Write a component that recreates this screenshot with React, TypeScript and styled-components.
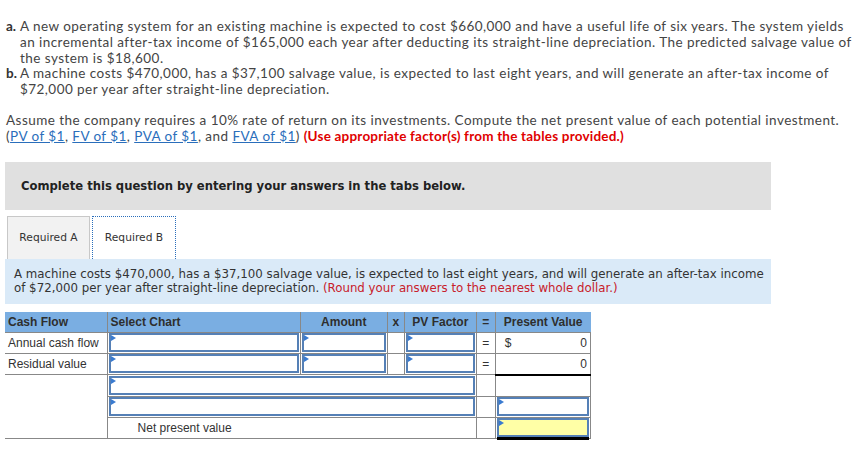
import styled, { createGlobalStyle, css } from "styled-components";

const GlobalStyle = createGlobalStyle`
  html, body {
    margin: 0;
    padding: 0;
    background: #fff;
  }
`;

const Page = styled.div`
  padding: 19px 0 0 6px;
  width: 848px;
`;

const Problem = styled.div`
  font-family: Lato, "Open Sans", sans-serif;
  font-size: 13.5px;
  line-height: 15.8px;
  letter-spacing: 0.45px;
  color: #444;
`;

const Item = styled.div`
  display: flex;
`;

const Label = styled.span`
  flex: 0 0 14px;
  font-weight: bold;
  letter-spacing: 0;
  color: #333;
`;

const ItemText = styled.div`
  flex: 1;
`;

const Assume = styled.p`
  margin: 15px 0 0;
`;

const Ref = styled.a`
  color: #2a6ebb;
  text-decoration: underline;
`;

const Warn = styled.strong`
  color: #e00000;
  letter-spacing: 0.2px;
`;

const Prompt = styled.div`
  margin: 17px 0 0 -1px;
  width: 766px;
  height: 48px;
  box-sizing: border-box;
  padding-left: 16px;
  display: flex;
  align-items: center;
  background: #e0e0e0;
  font-family: "DejaVu Sans", Verdana, sans-serif;
  font-weight: bold;
  font-size: 11.6px;
  color: #222;
`;

const Tabs = styled.div`
  display: flex;
  gap: 2px;
  margin: 6px 0 0 1px;
`;

const Tab = styled.div<{ $active?: boolean }>`
  width: 84px;
  height: 43px;
  box-sizing: border-box;
  display: flex;
  align-items: center;
  justify-content: center;
  font-family: "DejaVu Sans", Verdana, sans-serif;
  font-size: 10.7px;
  color: #333;
  ${(p) =>
    p.$active
      ? css`
          background: #fff;
          border: 1px dotted #2a6ebb;
          border-bottom: none;
        `
      : css`
          width: 83px;
          background: #f2f2f2;
          border: 1px solid #c8c8c8;
          border-bottom: none;
        `}
`;

const Info = styled.div`
  margin-left: -1px;
  width: 766px;
  box-sizing: border-box;
  padding: 8px 4px 9px 9px;
  background: #daeaf8;
  font-family: "DejaVu Sans", Verdana, sans-serif;
  font-size: 11.8px;
  line-height: 14px;
  color: #333;
`;

const Round = styled.span`
  color: #c8202a;
`;

const Grid = styled.table`
  margin: 8px 0 0 -1px;
  border-collapse: collapse;
  table-layout: fixed;
  width: 586px;
  font-family: "Liberation Sans", Arial, sans-serif;
  font-size: 12px;
  color: #333;
`;

const Head = styled.th<{ $align?: string }>`
  height: 20px;
  padding: 0 3px;
  background: #7aaee2;
  border: 1px solid #888;
  border-top: none;
  border-left: none;
  text-align: ${(p) => p.$align || "center"};
  font-weight: bold;
  color: #2e2e2e;
  &:last-child {
    border-right: none;
  }
`;

const Cell = styled.td<{ $align?: string; $total?: boolean; $open?: boolean }>`
  height: 20px;
  padding: 0 3px;
  border: 1px solid #888;
  border-left: none;
  text-align: ${(p) => p.$align || "left"};
  ${(p) =>
    p.$total &&
    css`
      border-top: 2px solid #000;
    `}
  ${(p) =>
    p.$open &&
    css`
      padding: 0;
    `}
`;

const LastCell = styled(Cell)`
  border-right: 1px solid #888;
`;

const Field = styled.div<{ $yellow?: boolean; $underline?: boolean }>`
  position: relative;
  height: 19px;
  margin: 0 1px;
  box-sizing: border-box;
  border: 2px solid #5580b6;
  background: ${(p) => (p.$yellow ? "#ffffa6" : "#fff")};
  ${(p) =>
    p.$underline &&
    css`
      box-shadow: 0 3px 0 #000;
    `}
  &::before {
    content: "";
    position: absolute;
    left: 0;
    top: 0;
    border-left: 5px solid #3a7bd0;
    border-top: 3px solid transparent;
    border-bottom: 3px solid transparent;
  }
`;

const Money = styled.div`
  display: flex;
  justify-content: space-between;
  padding-left: 6px;
`;

const NetLabel = styled.span`
  padding-left: 27px;
`;

const Nav = styled.div`
  display: flex;
  gap: 18px;
  margin: 10px 0 0 217px;
`;

const NavButton = styled.button<{ $primary?: boolean }>`
  height: 30px;
  border: none;
  border-radius: 2px;
  font-family: "Liberation Sans", Arial, sans-serif;
  font-size: 13px;
  color: ${(p) => (p.$primary ? "#fff" : "#3a6fb5")};
  background: ${(p) => (p.$primary ? "#3a6fb5" : "#dbe5f2")};
  width: ${(p) => (p.$primary ? "149px" : "183px")};
`;

const App: React.FC = () => {
  return (
    <Page>
      <GlobalStyle />
      <Problem>
        <Item>
          <Label>a.</Label>
          <ItemText>
            A new operating system for an existing machine is expected to cost $660,000 and have a useful
            life of six years. The system yields an incremental after-tax income of $165,000 each year after
            deducting its straight-line depreciation. The predicted salvage value of the system is $18,600.
          </ItemText>
        </Item>
        <Item>
          <Label>b.</Label>
          <ItemText>
            A machine costs $470,000, has a $37,100 salvage value, is expected to last eight years, and will
            generate an after-tax income of $72,000 per year after straight-line depreciation.
          </ItemText>
        </Item>
        <Assume>
          Assume the company requires a 10% rate of return on its investments. Compute the net present value
          of each potential investment. (<Ref>PV of $1</Ref>, <Ref>FV of $1</Ref>, <Ref>PVA of $1</Ref>, and{" "}
          <Ref>FVA of $1</Ref>) <Warn>(Use appropriate factor(s) from the tables provided.)</Warn>
        </Assume>
      </Problem>

      <Prompt>Complete this question by entering your answers in the tabs below.</Prompt>

      <Tabs>
        <Tab>Required A</Tab>
        <Tab $active>Required B</Tab>
      </Tabs>

      <Info>
        A machine costs $470,000, has a $37,100 salvage value, is expected to last eight years, and will
        generate an after-tax income of $72,000 per year after straight-line depreciation.{" "}
        <Round>(Round your answers to the nearest whole dollar.)</Round>
      </Info>

      <Grid>
        <colgroup>
          <col style={{ width: 102 }} />
          <col style={{ width: 193 }} />
          <col style={{ width: 87 }} />
          <col style={{ width: 17 }} />
          <col style={{ width: 72 }} />
          <col style={{ width: 19 }} />
          <col style={{ width: 95 }} />
        </colgroup>
        <thead>
          <tr>
            <Head $align="left">Cash Flow</Head>
            <Head $align="left">Select Chart</Head>
            <Head>Amount</Head>
            <Head>x</Head>
            <Head>PV Factor</Head>
            <Head>=</Head>
            <Head>Present Value</Head>
          </tr>
        </thead>
        <tbody>
          <tr>
            <Cell>Annual cash flow</Cell>
            <Cell $open><Field /></Cell>
            <Cell $open><Field /></Cell>
            <Cell />
            <Cell $open><Field /></Cell>
            <Cell $align="center">=</Cell>
            <LastCell>
              <Money>
                <span>$</span>
                <span>0</span>
              </Money>
            </LastCell>
          </tr>
          <tr>
            <Cell>Residual value</Cell>
            <Cell $open><Field /></Cell>
            <Cell $open><Field /></Cell>
            <Cell />
            <Cell $open><Field /></Cell>
            <Cell $align="center">=</Cell>
            <LastCell $align="right">0</LastCell>
          </tr>
          <tr>
            <Cell rowSpan={3} />
            <Cell colSpan={4} $open><Field /></Cell>
            <Cell />
            <LastCell $total />
          </tr>
          <tr>
            <Cell colSpan={4} $open><Field /></Cell>
            <Cell />
            <LastCell $open><Field /></LastCell>
          </tr>
          <tr>
            <Cell colSpan={4}>
              <NetLabel>Net present value</NetLabel>
            </Cell>
            <Cell />
            <LastCell $open><Field $yellow $underline /></LastCell>
          </tr>
        </tbody>
      </Grid>

      <Nav>
        <NavButton $primary>&lt; Required A</NavButton>
        <NavButton>Required B &gt;</NavButton>
      </Nav>
    </Page>
  );
};

export default App;
